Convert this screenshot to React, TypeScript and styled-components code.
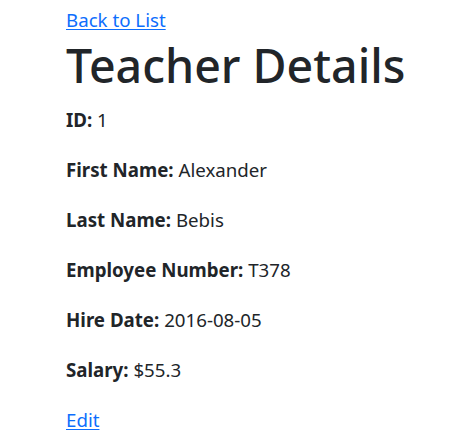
import React from "react";
import styled, { createGlobalStyle } from "styled-components";

const Global = createGlobalStyle`
  html, body { margin: 0; padding: 0; background: #fff; }
  body {
    font-family: "Noto Sans", "Open Sans", "DejaVu Sans", sans-serif;
    font-size: 18.7px;
    line-height: 30px;
    color: #212529;
  }
`;

const Page = styled.main`
  padding: 5px 0 0 66px;
`;

const Link = styled.a`
  color: #0d6efd;
  text-decoration: underline;
  text-underline-offset: 2px;
`;

const Title = styled.h1`
  margin: 0 0 10px;
  font-size: 46.5px;
  line-height: 60px;
  font-weight: 500;
  letter-spacing: 0;
`;

const Row = styled.p`
  margin: 0 0 20px;
`;

const Label = styled.strong`
  font-weight: 700;
`;

const fields: [string, string][] = [
  ["ID", "1"],
  ["First Name", "Alexander"],
  ["Last Name", "Bebis"],
  ["Employee Number", "T378"],
  ["Hire Date", "2016-08-05"],
  ["Salary", "$55.3"],
];

export default function App() {
  return (
    <>
      <Global />
      <Page>
        <Link href="#">Back to List</Link>
        <Title>Teacher Details</Title>
        {fields.map(([k, v]) => (
          <Row key={k}>
            <Label>{k}:</Label> {v}
          </Row>
        ))}
        <Link href="#">Edit</Link>
      </Page>
    </>
  );
}
